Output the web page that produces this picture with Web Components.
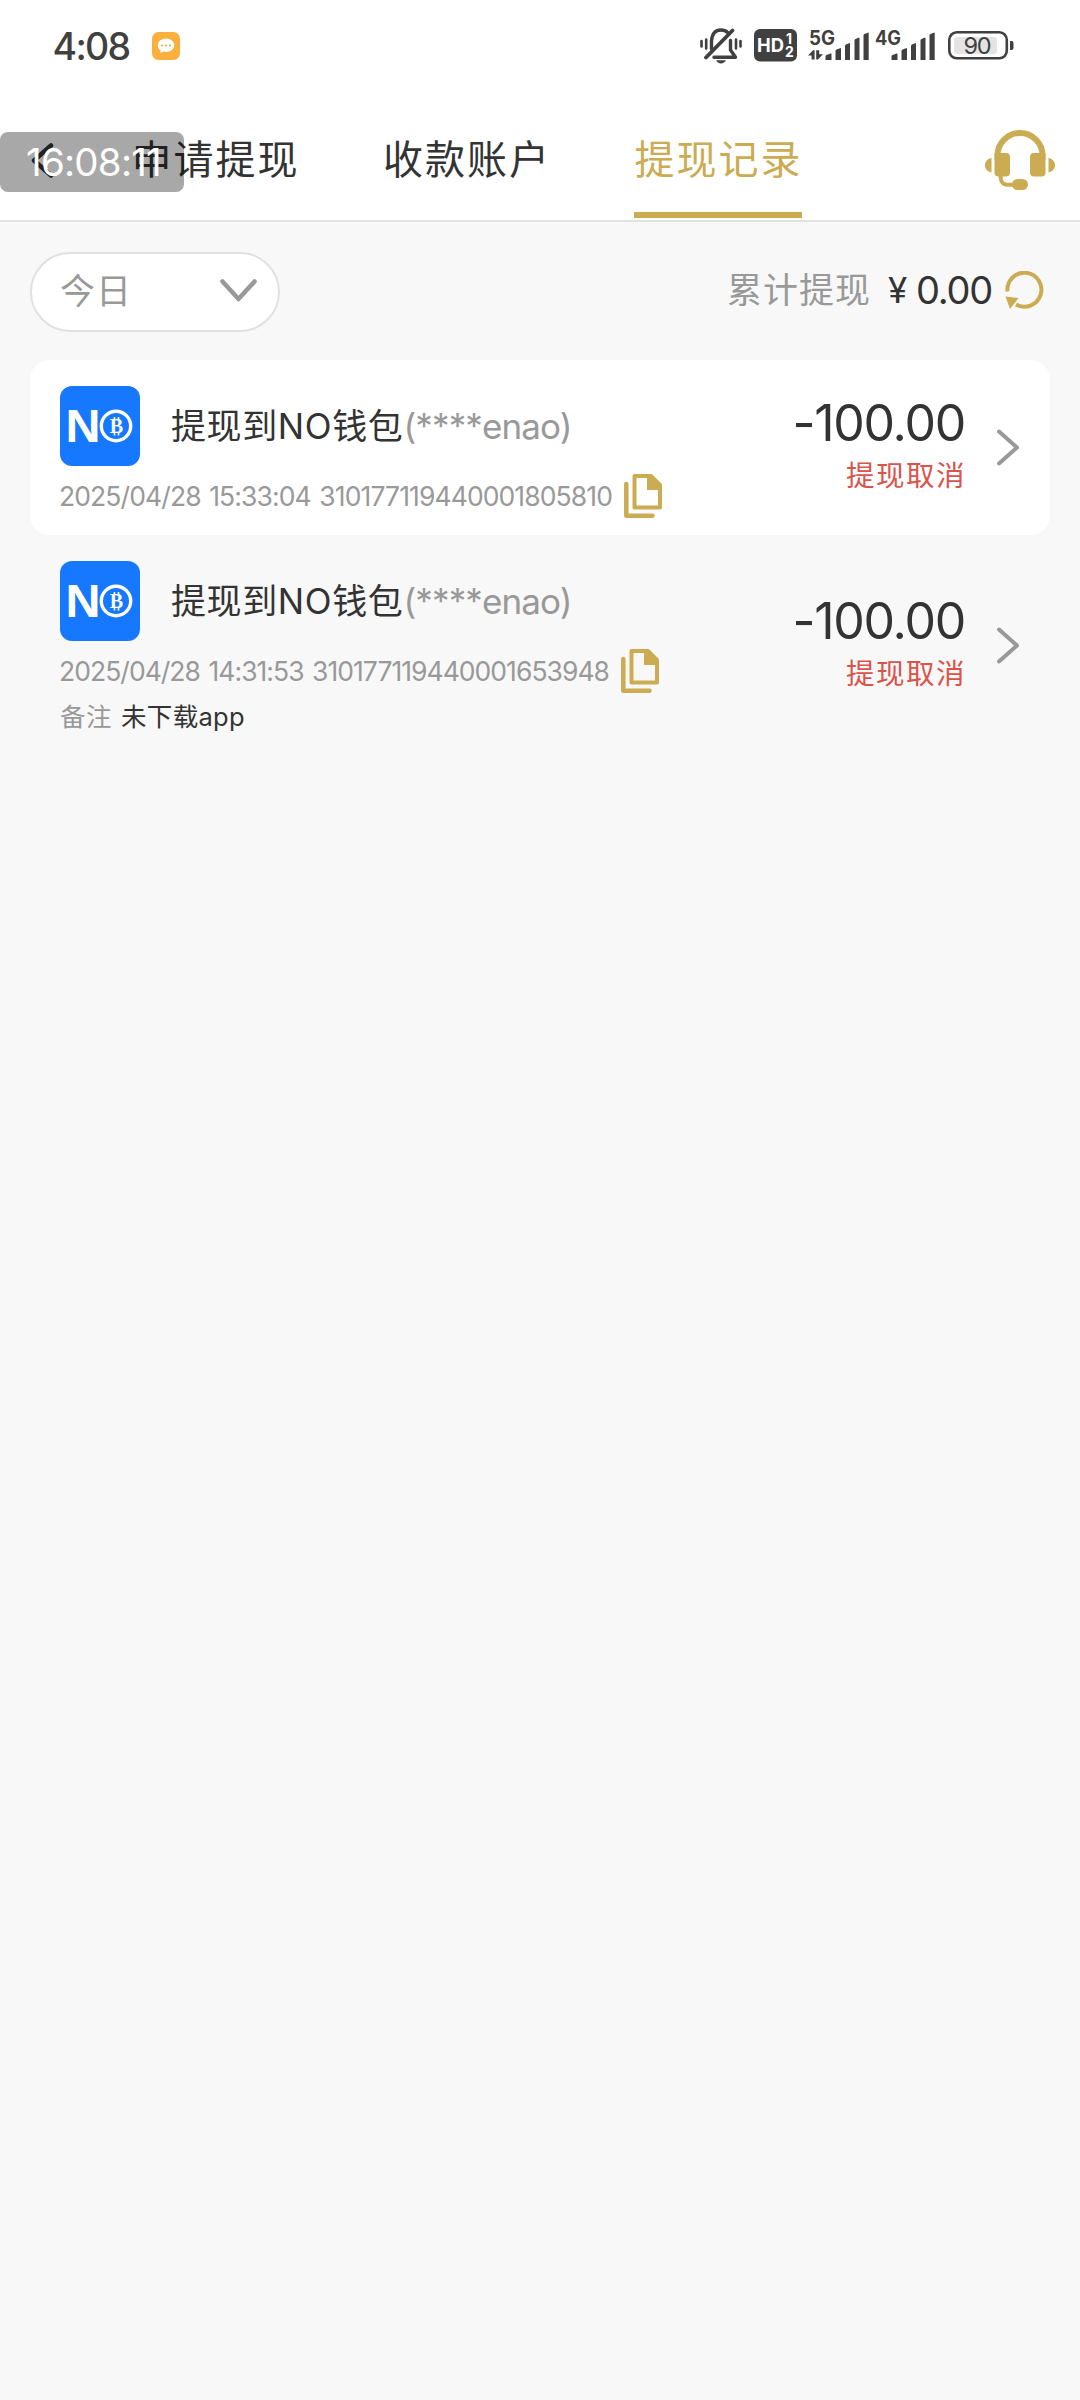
<!DOCTYPE html>
<html lang="zh-CN">
<head>
<meta charset="utf-8">
<meta name="viewport" content="width=device-width, initial-scale=1">
<title>提现记录</title>
<style>
  body { margin: 0; background: #f8f8f8; color: #333; font-family: Inter, "Noto Sans CJK SC", sans-serif; }
</style>
</head>
<body>
<withdraw-page></withdraw-page>

<script>
const define = (name, html, setup) => {
  const template = document.createElement('template');
  template.innerHTML = html;
  customElements.define(name, class extends HTMLElement {
    constructor() {
      super();
      this.attachShadow({ mode: 'open' }).append(template.content.cloneNode(true));
    }
    connectedCallback() { if (setup) setup(this, this.shadowRoot); }
  });
};

/* One line of text tracked so that its advance equals the "w" attribute. */
define('fit-text', `
  <style>
    :host { display: block; white-space: nowrap; flex: none; }
    span { display: inline-block; white-space: nowrap; }
  </style><span><slot></slot></span>`, (el, root) => {
  const span = root.querySelector('span');
  const w = parseFloat(el.getAttribute('w'));
  el.style.width = w + 'px';
  const n = el.textContent.length;
  span.style.letterSpacing = '0px';
  const natural = span.getBoundingClientRect().width;
  span.style.letterSpacing = ((w - natural) / n).toFixed(3) + 'px';
});

define('signal-bars', `
  <style>:host { display: block; flex: none; width: 61px; height: 44px; margin-top: -6px; } svg { display: block; }</style>
  <svg width="61" height="44" viewBox="0 -8 61 44" fill="#404040">
    <g id="arrows"><path d="M0 25.500L5 20.200h1.600V29.500H3.600v-4zM8.200 20.200h3v4H15l-5 5.300H8.200z"/></g>
    <path d="M17.500 30v-3.500q0-1 1-1.400l4-1.600q1-.4 1 .8V30zM27.500 30V21q0-1 1-1.400l3.500-1.400q1-.4 1 .8V30zM37 30V16q0-1 1-1.400l3-1.400q1-.4 1 .8V30zM46.500 30V10.500q0-1 1-1.400l3-1.400q1-.4 1 .8V30zM55.500 30V5.500q0-1 1-1.400l3.200-1.400q1-.4 1 .8V30z"/>
    <text id="net" x="1" y="14.500" font-family="Inter" font-size="19.500" font-weight="700" textLength="26" lengthAdjust="spacingAndGlyphs"></text>
  </svg>`, (el, root) => {
  root.getElementById('net').textContent = el.getAttribute('net');
  if (!el.hasAttribute('active')) root.getElementById('arrows').remove();
});

define('status-bar', `
  <style>
    :host { display: flex; align-items: flex-start; height: 90px; box-sizing: border-box; padding: 28px 66px 0 52.500px; color: #404040; }
    .time { font-size: 37.500px; line-height: 38px; font-weight: 500; }
    .chat { margin: 4px 0 0 22.500px; }
    .right { margin-left: auto; display: flex; }
    svg { display: block; flex: none; }
    .bell { margin-right: 12px; }
    .hd { margin: 1px 11px 0 0; }
    signal-bars + signal-bars { margin-left: 5px; }
    .bat { margin: 3px 0 0 13px; }
  </style>
  <fit-text class="time" w="77">4:08</fit-text>
  <svg class="chat" width="28" height="28" viewBox="0 0 28 28">
    <rect width="28" height="28" rx="6.500" fill="#fbaf3c"/>
    <path d="M14 6.500c4.700 0 8.300 3 8.300 6.800s-3.600 6.700-8.300 6.700c-1 0-2-.1-2.800-.4L8.300 21l.2-2.500C6.800 17.300 5.800 15.500 5.800 13.300c0-3.800 3.500-6.800 8.200-6.800z" fill="#fff"/>
    <g fill="#fbaf3c"><circle cx="10" cy="13.500" r="1.100"/><circle cx="14" cy="13.500" r="1.100"/><circle cx="18" cy="13.500" r="1.100"/></g>
  </svg>
  <div class="right">
    <svg class="bell" width="42" height="36" viewBox="0 0 42 36" fill="none" stroke="#404040" stroke-width="3.400" stroke-linecap="round" stroke-linejoin="round">
      <path d="M11.500 21V13C12 6 15 2 21 2c3 0 5 .8 6.700 2.400M14 29.300H35.500L30.500 22V12.500"/>
      <path d="M6 29.500L32.500 2.500" stroke-width="3.800"/>
      <path d="M16 32.300h10c-1 2-2.800 3.200-5 3.200s-4-1.200-5-3.200z" fill="#404040" stroke="none"/>
      <path d="M1.500 13v5.500M6.200 11.500v9M36 11.500v9M40.500 13v5.500" stroke-width="2.600"/>
    </svg>
    <svg class="hd" width="43" height="33" viewBox="0 0 43 33">
      <rect width="43" height="32.500" rx="6" fill="#404040"/>
      <g fill="#fff" font-family="Inter" font-weight="700">
        <text x="3" y="23" font-size="19" textLength="27" lengthAdjust="spacingAndGlyphs">HD</text>
        <text x="32" y="15" font-size="14">1</text>
        <text x="31" y="28" font-size="14">2</text>
      </g>
    </svg>
    <signal-bars net="5G" active></signal-bars>
    <signal-bars net="4G"></signal-bars>
    <svg class="bat" width="66" height="29" viewBox="0 0 66 29">
      <rect x="1.300" y="1.300" width="57.500" height="26" rx="7.500" fill="none" stroke="#404040" stroke-width="2.600"/>
      <rect x="6" y="6" width="43" height="17" rx="3" fill="#e4e4e4"/>
      <path d="M62 10h1.500q2 0 2 2v5q0 2-2 2H62z" fill="#404040"/>
      <text x="15.500" y="22.800" font-family="Inter" font-size="23.500" fill="#404040" textLength="28">90</text>
    </svg>
  </div>`);

define('nav-bar', `
  <style>
    :host { display: flex; height: 130px; border-bottom: 2px solid #e2e2e2; position: relative; }
    .back { margin: 53px 77px 0 30px; width: 24px; height: 35px; }
    .tabs { display: flex; gap: 83.500px; }
    .tab { box-sizing: border-box; height: 128px; width: 168px; padding: 17px 0 0 .5px; border-bottom: 6px solid transparent; font-size: 40px; line-height: 106px; }
    .tab.on { color: #cbac52; border-color: #cbac52; }
    .help { margin: 40px 25px 0 auto; }
    .clock { position: absolute; left: 0; top: 42px; width: 184px; height: 60px; box-sizing: border-box; padding-left: 26px; border-radius: 8px; background: rgba(0,0,0,.34); color: #fff; font-size: 38.500px; line-height: 60px; }
  </style>
  <svg class="back" viewBox="0 0 24 35" fill="none" stroke="#333" stroke-width="4.500" stroke-linecap="round" stroke-linejoin="round"><path d="M21 2.500L4 17.500 21 32.500"/></svg>
  <div class="tabs">
    <div class="tab"><fit-text w="168">申请提现</fit-text></div>
    <div class="tab"><fit-text w="168">收款账户</fit-text></div>
    <div class="tab on"><fit-text w="168">提现记录</fit-text></div>
  </div>
  <svg class="help" width="70" height="60" viewBox="0 0 70 60" fill="#cbac52">
    <path d="M12.500 30V25.500a22.500 22.500 0 0 1 45 0V30" fill="none" stroke="#cbac52" stroke-width="6"/>
    <path d="M9.500 23H21q4 0 4 4V42.500q0 4-4 4H13.500q-4 0-4-4zM60.500 23H49q-4 0-4 4V42.500q0 4 4 4H56.500q4 0 4-4z"/>
    <path d="M6.500 28v14.500C-2.200 41-2.200 29.500 6.500 28zM63.500 28v14.500c8.700-1.500 8.700-13 0-14.500z"/>
    <path d="M15.500 45c0 7 2 9.700 7 9.700H30" fill="none" stroke="#cbac52" stroke-width="4"/>
    <rect x="27" y="49" width="16" height="11" rx="5.500"/>
  </svg>
  <div class="clock"><fit-text w="135">16:08:11</fit-text></div>`);

define('filter-bar', `
  <style>
    :host { display: flex; align-items: center; padding: 30px 36px 28px 30px; height: 80px; }
    .pill { box-sizing: border-box; width: 250px; height: 80px; border: 2px solid #e1e1e1; border-radius: 40px; background: #fff; padding: 0 21px 3px 28px; display: flex; align-items: center; justify-content: space-between; font-size: 35px; line-height: 50px; color: #999; }
    .sum { margin-left: auto; display: flex; align-items: center; font-size: 35px; line-height: 50px; padding-bottom: 4px; }
    .label { color: #999; margin-right: 17px; }
    .yen { margin-right: 5px; }
    .num { font-size: 38px; margin-right: 13px; }
    svg { display: block; flex: none; }
  </style>
  <div class="pill"><fit-text w="72">今日</fit-text>
    <svg width="37" height="23" viewBox="0 0 37 23" fill="none" stroke="#999" stroke-width="4.500" stroke-linecap="round" stroke-linejoin="round"><path d="M2.500 2.500L18.500 20 34.500 2.500"/></svg>
  </div>
  <div class="sum">
    <fit-text class="label" w="144">累计提现</fit-text><fit-text class="yen" w="23">¥</fit-text><fit-text class="num" w="76">0.00</fit-text>
    <svg width="39" height="38" viewBox="0 0 39 38"><path d="M2.500 20.500A17 17 0 1 1 11 33.500" fill="none" stroke="#cbac52" stroke-width="4"/><path d="M0.500 25.500l13 1.500-8.500 11z" fill="#cbac52"/></svg>
  </div>`);

define('wallet-logo', `
  <style>:host { display: block; width: 80px; height: 80px; flex: none; } svg { display: block; }</style>
  <svg width="80" height="80" viewBox="0 0 80 80">
    <rect width="80" height="80" rx="12" fill="#1677ff"/>
    <text x="5.500" y="56" font-family="Liberation Sans" font-weight="700" font-size="47" fill="#fff" textLength="35" lengthAdjust="spacingAndGlyphs">N</text>
    <circle cx="56" cy="40" r="14.700" fill="#1677ff" stroke="#fff" stroke-width="3.400"/>
    <text x="49.800" y="46.800" font-family="Liberation Serif" font-weight="700" font-size="20" fill="#fff">B</text>
    <path d="M54.500 31v3M58.500 31v3M54.500 46v3.500M58.500 46v3.500" stroke="#fff" stroke-width="1.600"/>
  </svg>`);

define('copy-icon', `
  <style>:host { display: block; width: 38px; height: 44px; flex: none; } svg { display: block; }</style>
  <svg width="38" height="44" viewBox="0 0 38 44">
    <path d="M10.500 2H27l9 9v22.500H10.500z" fill="none" stroke="#cbac52" stroke-width="4" stroke-linejoin="round"/>
    <path d="M23 1h5l9 9v6H23z" fill="#cbac52"/>
    <path d="M2.300 10v31.700H28.500" fill="none" stroke="#cbac52" stroke-width="4.500" stroke-linecap="round" stroke-linejoin="round"/>
  </svg>`);

define('record-item', `
  <style>
    :host { display: flex; box-sizing: border-box; height: 175px; margin: 0 30px; padding: 0 30px; border-radius: 20px; }
    :host([selected]) { background: #fff; }
    :host([tall]) { height: 221px; }
    .main { padding-top: 26px; }
    .title { display: flex; align-items: center; gap: 31px; font-size: 35px; line-height: 80px; }
    .name { display: flex; }
    .meta { display: flex; align-items: center; gap: 12px; height: 44px; margin: 8px 0 0 -1px; font-size: 26.500px; line-height: 46px; word-spacing: 2px; }
    .grey, .meta { color: #999; }
    .side { margin-left: auto; display: flex; align-items: center; gap: 32px; }
    .money { display: flex; flex-direction: column; align-items: flex-end; }
    .amount { font-size: 50px; line-height: 56px; }
    .state { font-size: 28.500px; line-height: 50px; color: #d9544a; margin-right: -1px; }
    .side svg { display: block; margin-right: 1px; }
  </style>
  <div class="main">
    <div class="title"><wallet-logo></wallet-logo>
      <div class="name"><fit-text w="232.500">提现到NO钱包</fit-text><fit-text class="grey" w="168">(****enao)</fit-text></div>
    </div>
    <div class="meta"><slot name="meta"></slot><copy-icon></copy-icon></div>
    <slot name="note"></slot>
  </div>
  <div class="side">
    <div class="money"><fit-text class="amount" w="172.500">-100.00</fit-text><fit-text class="state" w="120">提现取消</fit-text></div>
    <svg width="22" height="37" viewBox="0 0 22 37" fill="none" stroke="#999" stroke-width="4" stroke-linecap="round" stroke-linejoin="round"><path d="M2 2.500L20 18.500 2 34.500"/></svg>
  </div>`);

define('record-note', `
  <style>
    :host { display: flex; gap: 9px; font-size: 25.500px; line-height: 46px; margin-top: 1px; }
    .k { color: #999; }
  </style><fit-text class="k" w="52">备注</fit-text>`, (el, root) => {
  const value = document.createElement('fit-text');
  value.setAttribute('w', '124');
  value.textContent = el.getAttribute('text');
  root.append(value);
});

define('withdraw-page', `
  <style>
    :host { display: block; min-height: 2400px; background: #f8f8f8; }
    header { background: #fff; }
  </style>
  <header><status-bar></status-bar><nav-bar></nav-bar></header>
  <filter-bar></filter-bar>
  <record-item selected><fit-text slot="meta" w="553">2025/04/28 15:33:04 310177119440001805810</fit-text></record-item>
  <record-item tall><fit-text slot="meta" w="550">2025/04/28 14:31:53 310177119440001653948</fit-text>
    <record-note slot="note" text="未下载app"></record-note>
  </record-item>`);
</script>
</body>
</html>
